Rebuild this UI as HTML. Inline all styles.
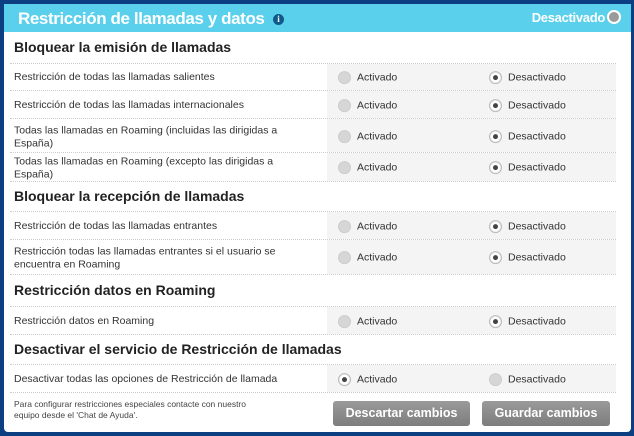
<!DOCTYPE html>
<html><head><meta charset="utf-8"><style>
*{margin:0;padding:0;box-sizing:border-box}
body{width:634px;height:436px;background:#0b3f82;font-family:"Liberation Sans",sans-serif;position:relative;overflow:hidden}
.panel{position:absolute;left:4px;top:4px;width:627px;height:428px;background:#fff;border-radius:0 0 4px 4px}
.hdr{position:absolute;left:0;top:0;width:627px;height:28px;background:#5bd0ec}
.hdr .t{position:absolute;left:14px;top:5px;color:#fff;font-size:17px;font-weight:bold;letter-spacing:-0.4px}
.info{display:inline-block;width:11px;height:11px;border-radius:50%;background:#0f5a8a;color:#fff;font-size:9px;line-height:11px;text-align:center;vertical-align:middle;margin-left:4px;font-family:"Liberation Serif",serif}
.hdr .d{position:absolute;right:26px;top:6px;color:#fff;font-size:13px;font-weight:bold;letter-spacing:-0.3px}
.hdr .r{position:absolute;right:10px;top:6px;width:14px;height:14px;border-radius:50%;background:#9a9a9a;border:2px solid #fff}
.h{position:absolute;left:14px;font-size:14px;font-weight:bold;color:#222}
.row{position:absolute;left:10px;width:606px;border-bottom:1px dotted #ccc;font-size:10.5px;color:#333}
.row.first{border-top:1px dotted #ccc}
.row .l{position:absolute;left:4px;top:50%;transform:translateY(-45%);width:300px;line-height:13px}
.row .g{position:absolute;left:317px;top:0;bottom:0;right:0;background:#f4f4f4}
.rad{position:absolute;top:50%;transform:translateY(-45%);width:13px;height:13px;border-radius:50%}
.off{background:#d6d6d6;border:1px solid #ccc}
.on{background:#fff;border:1px solid #bbb;box-shadow:inset 0 0 1px #999}
.on::after{content:"";position:absolute;left:3px;top:3px;width:5px;height:5px;border-radius:50%;background:#444}
.lab{position:absolute;top:50%;transform:translateY(-45%);font-size:10.5px;color:#333}
.btn{position:absolute;top:401px;height:25px;border-radius:3px;background:linear-gradient(#9a9a9a,#7d7d7d);color:#fff;font-weight:bold;font-size:12.5px;text-align:center;line-height:25px}
.foot{position:absolute;left:14px;top:399px;font-size:8.5px;color:#444;line-height:11px}
</style></head><body>
<div class="panel">
<div class="hdr"><div class="t">Restricción de llamadas y datos <span class="info">i</span></div><div class="d">Desactivado</div><div class="r"></div></div>
</div>

<div class="h" style="top:39px">Bloquear la emisión de llamadas</div>
<div class="row first" style="top:63px;height:28px"><div class="g"></div><div class="l">Restricción de todas las llamadas salientes</div><div class="rad off" style="left:328px"></div><div class="lab" style="left:347px">Activado</div><div class="rad on" style="left:479px"></div><div class="lab" style="left:498px">Desactivado</div></div>
<div class="row" style="top:91px;height:28px"><div class="g"></div><div class="l">Restricción de todas las llamadas internacionales</div><div class="rad off" style="left:328px"></div><div class="lab" style="left:347px">Activado</div><div class="rad on" style="left:479px"></div><div class="lab" style="left:498px">Desactivado</div></div>
<div class="row" style="top:119px;height:34px"><div class="g"></div><div class="l">Todas las llamadas en Roaming (incluidas las dirigidas a España)</div><div class="rad off" style="left:328px"></div><div class="lab" style="left:347px">Activado</div><div class="rad on" style="left:479px"></div><div class="lab" style="left:498px">Desactivado</div></div>
<div class="row" style="top:153px;height:29px"><div class="g"></div><div class="l">Todas las llamadas en Roaming (excepto las dirigidas a España)</div><div class="rad off" style="left:328px"></div><div class="lab" style="left:347px">Activado</div><div class="rad on" style="left:479px"></div><div class="lab" style="left:498px">Desactivado</div></div>

<div class="h" style="top:188px">Bloquear la recepción de llamadas</div>
<div class="row first" style="top:211px;height:29px"><div class="g"></div><div class="l">Restricción de todas las llamadas entrantes</div><div class="rad off" style="left:328px"></div><div class="lab" style="left:347px">Activado</div><div class="rad on" style="left:479px"></div><div class="lab" style="left:498px">Desactivado</div></div>
<div class="row" style="top:240px;height:35px"><div class="g"></div><div class="l">Restricción todas las llamadas entrantes si el usuario se encuentra en Roaming</div><div class="rad off" style="left:328px"></div><div class="lab" style="left:347px">Activado</div><div class="rad on" style="left:479px"></div><div class="lab" style="left:498px">Desactivado</div></div>

<div class="h" style="top:282px">Restricción datos en Roaming</div>
<div class="row first" style="top:306px;height:29px"><div class="g"></div><div class="l">Restricción datos en Roaming</div><div class="rad off" style="left:328px"></div><div class="lab" style="left:347px">Activado</div><div class="rad on" style="left:479px"></div><div class="lab" style="left:498px">Desactivado</div></div>

<div class="h" style="top:341px">Desactivar el servicio de Restricción de llamadas</div>
<div class="row first" style="top:364px;height:29px"><div class="g"></div><div class="l">Desactivar todas las opciones de Restricción de llamada</div><div class="rad on" style="left:328px"></div><div class="lab" style="left:347px">Activado</div><div class="rad off" style="left:479px"></div><div class="lab" style="left:498px">Desactivado</div></div>

<div class="foot">Para configurar restricciones especiales contacte con nuestro<br>equipo desde el 'Chat de Ayuda'.</div>
<div class="btn" style="left:333px;width:137px">Descartar cambios</div>
<div class="btn" style="left:482px;width:128px">Guardar cambios</div>
</body></html>
